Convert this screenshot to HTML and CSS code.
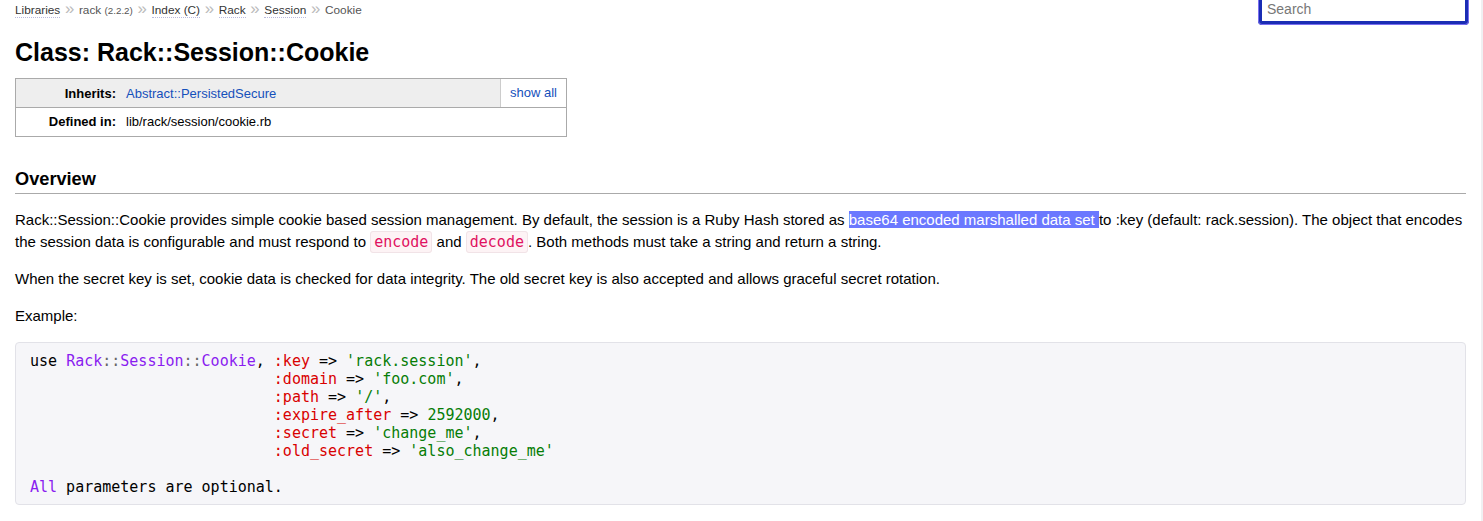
FILE: index.html
```html
<!DOCTYPE html>
<html>
<head>
<meta charset="utf-8">
<link rel="stylesheet" href="styles.css">
</head>
<body>
<div class="header">
  <div class="menu">
    <a href="#">Libraries</a> <span class="sep">&raquo;</span>
    <span class="title">rack <small>(2.2.2)</small></span> <span class="sep">&raquo;</span>
    <a href="#">Index (C)</a> <span class="sep">&raquo;</span>
    <a href="#">Rack</a> <span class="sep">&raquo;</span>
    <a href="#">Session</a> <span class="sep">&raquo;</span>
    <span class="title">Cookie</span>
  </div>
  <div class="search"><input type="text" placeholder="Search"></div>
</div>

<h1 class="page-title">Class: Rack::Session::Cookie</h1>

<div class="box">
  <div class="row row-alt">
    <div class="label">Inherits:</div>
    <div class="value"><a href="#">Abstract::PersistedSecure</a></div>
    <div class="showall"><a href="#">show all</a></div>
  </div>
  <div class="row">
    <div class="label">Defined in:</div>
    <div class="value">lib/rack/session/cookie.rb</div>
  </div>
</div>

<h2 class="section">Overview</h2>

<div class="docstring">
  <p>Rack::Session::Cookie provides simple cookie based session management. By default, the session is a Ruby Hash stored as <span class="sel">base64 encoded marshalled data set </span>to :key (default: rack.session). The object that encodes the session data is configurable and must respond to <code>encode</code> and <code>decode</code>. Both methods must take a string and return a string.</p>
  <p>When the secret key is set, cookie data is checked for data integrity. The old secret key is also accepted and allows graceful secret rotation.</p>
  <p>Example:</p>
<pre class="code">use <span class="c">Rack</span><span class="op">::</span><span class="c">Session</span><span class="op">::</span><span class="c">Cookie</span>, <span class="s">:key</span> =&gt; <span class="str">'rack.session'</span>,
                           <span class="s">:domain</span> =&gt; <span class="str">'foo.com'</span>,
                           <span class="s">:path</span> =&gt; <span class="str">'/'</span>,
                           <span class="s">:expire_after</span> =&gt; <span class="str">2592000</span>,
                           <span class="s">:secret</span> =&gt; <span class="str">'change_me'</span>,
                           <span class="s">:old_secret</span> =&gt; <span class="str">'also_change_me'</span>

<span class="c">All</span> parameters are optional.</pre>
</div>
</body>
</html>
```

FILE: styles.css
```css
html, body {
  margin: 0;
  background: #fff;
}
body {
  padding: 0 15px;
  font-family: "Liberation Sans", Arial, sans-serif;
  font-size: 13px;
  color: #000;
  border-right: 2px solid #f0f0f2;
  height: 521px;
  box-sizing: border-box;
  overflow: hidden;
}
a { color: #1550bb; text-decoration: none; }

.header {
  display: flex;
  justify-content: space-between;
  align-items: flex-start;
  height: 22px;
}
.menu {
  padding-top: 1px;
  font-size: 16.8px;
  color: #bbb;
  line-height: 16px;
}
.menu a, .menu .title {
  font-size: 11.8px;
}
.menu a {
  color: #333;
  border-bottom: 1px dotted #bbd;
}
.menu .title { color: #555; }
.menu .title small { font-size: 9.8px; }
.menu .sep { font-size: 16.8px; color: #bbb; }

.search {
  margin-top: -9px;
  margin-right: -3px;
}
.search input {
  box-sizing: border-box;
  width: 211px;
  height: 34px;
  border: 4px solid #1a2db4;
  border-radius: 4px;
  outline: 1px solid #7a6ef0;
  outline-offset: -1px;
  font-family: "Liberation Sans", Arial, sans-serif;
  font-size: 14px;
  line-height: 18px;
  padding: 5px 5px 3px;
  color: #333;
  background: #fff;
}
.search input::placeholder { color: #777; }

.page-title {
  font-size: 25px;
  font-weight: bold;
  margin: 15px 0 11px;
  line-height: 30px;
}

.box {
  width: 552px;
  box-sizing: border-box;
  border: 1px solid #aaa;
  font-size: 13px;
}
.row {
  display: flex;
  align-items: stretch;
  min-height: 28px;
}
.row-alt {
  background: #eee;
  border-bottom: 1px solid #aaa;
  height: 27px;
}
.label {
  width: 100px;
  text-align: right;
  font-weight: bold;
  padding: 7px 10px 0 0;
}
.value {
  flex: 1;
  padding-top: 7px;
}
.row:last-child .label, .row:last-child .value { padding-top: 6px; }
.showall {
  background: #fff;
  border-left: 1px solid #ccc;
  padding: 6px 9px 0;
  width: 47px;
}

.section {
  font-size: 18.2px;
  font-weight: bold;
  margin: 32px 0 0;
  padding-bottom: 3px;
  border-bottom: 1px solid #aaa;
  line-height: 21px;
}

.docstring {
  font-size: 15px;
  line-height: 22px;
  padding-top: 15px;
}
.docstring p {
  margin: 0 0 15px;
}
.sel {
  background: #6b78ff;
  color: #fff;
}
code {
  font-family: "DejaVu Sans Mono", monospace;
  font-size: 15px;
  color: #e0115f;
  background: #fdf3f5;
  border: 1px solid #f1e3e7;
  border-radius: 3px;
  padding: 1px 3px;
}

.code {
  margin: 15px 0 0;
  background: #f6f6f9;
  border: 1px solid #e2e2e8;
  border-radius: 4px;
  padding: 9px 14px 8px;
  font-family: "DejaVu Sans Mono", monospace;
  font-size: 15px;
  line-height: 18px;
  color: #000;
}
.code .c { color: #8a1cf0; }
.code .op { color: #666; }
.code .s { color: #d90000; }
.code .str { color: #067d06; }
```
